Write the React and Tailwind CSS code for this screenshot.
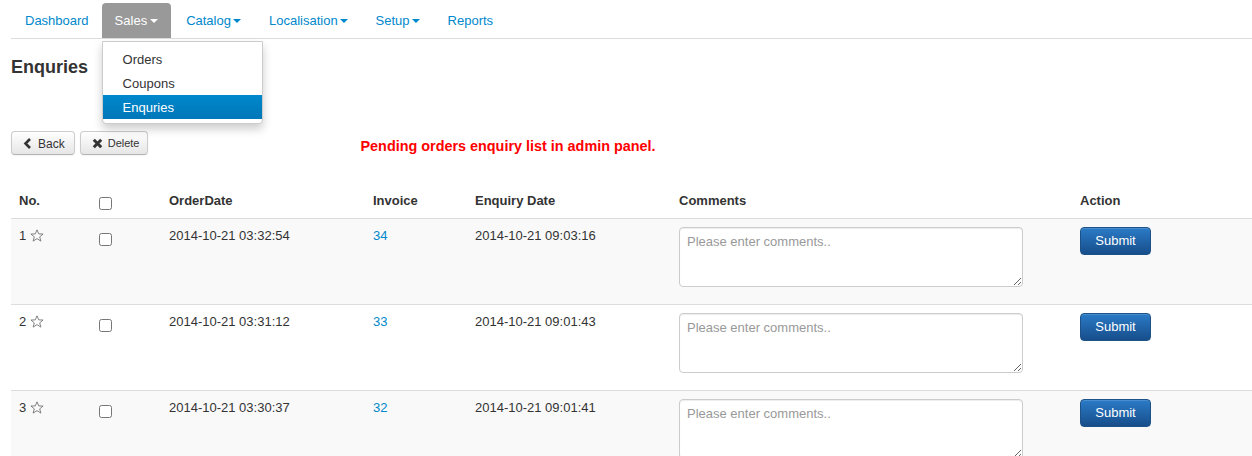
import React from "react";

const font = { fontFamily: '"Liberation Sans", Arial, Helvetica, sans-serif' };

function Caret({ white }) {
  return (
    <span
      className={`inline-block h-0 w-0 border-x-[4px] border-t-[4px] border-x-transparent ${
        white ? "ml-[3px] border-t-white" : "ml-[2px] border-t-[#0088cc]"
      }`}
    />
  );
}

function Star() {
  return (
    <svg width="14" height="13" viewBox="0 0 26 24" className="ml-[4px] -mt-[2px] inline-block align-middle">
      <path
        d="M13 1.5 L16.2 9 L24.3 9.3 L18 14.5 L20.2 22.4 L13 17.8 L5.8 22.4 L8 14.5 L1.7 9.3 L9.8 9 Z"
        fill="none"
        stroke="#666"
        strokeWidth="1.5"
        strokeLinejoin="round"
      />
    </svg>
  );
}

const rows = [
  { no: 1, order: "2014-10-21 03:32:54", inv: "34", enq: "2014-10-21 09:03:16" },
  { no: 2, order: "2014-10-21 03:31:12", inv: "33", enq: "2014-10-21 09:01:43" },
  { no: 3, order: "2014-10-21 03:30:37", inv: "32", enq: "2014-10-21 09:01:41" },
];

const cols = "grid grid-cols-[80px_70px_204px_102px_204px_401px_1fr]";

function Check({ head }) {
  return (
    <div className="h-[18px]">
      <input type="checkbox" className={`m-0 block h-[13px] w-[13px] ${head ? "mt-[5px]" : "mt-[6px]"}`} />
    </div>
  );
}

export default function App() {
  return (
    <div className="h-[456px] w-[1252px] overflow-hidden bg-white text-[13px] leading-[18px] text-[#333]" style={font}>
      <div className="pl-[11px]">
        {/* Nav */}
        <div className="relative flex h-[39px] items-end border-b border-[#ddd] pl-px">
          <a className="flex h-[35px] items-center px-[13px] pt-px text-[#0088cc]">Dashboard</a>
          <div className="relative mr-[2px]">
            <a className="flex h-[35px] items-center rounded-t-[4px] bg-[#999] px-[13px] pt-px text-white">
              Sales
              <Caret white />
            </a>
            <div className="absolute left-0 top-[38px] z-10 w-[161px] rounded-b-[4px] border border-[#ccc] bg-white pb-[4px] pt-[5px] shadow-[0_5px_10px_rgba(0,0,0,0.2)]">
              <div className="flex h-[24px] items-center px-[20px] pt-[2px] text-[#333]">Orders</div>
              <div className="flex h-[24px] items-center px-[20px] pt-px text-[#333]">Coupons</div>
              <div className="flex h-[24px] items-center bg-gradient-to-b from-[#0088cc] to-[#0077b8] px-[20px] pt-px text-white">
                Enquries
              </div>
            </div>
          </div>
          <a className="mr-[2px] flex h-[35px] items-center px-[13px] pt-px text-[#0088cc]">
            Catalog
            <Caret />
          </a>
          <a className="mr-[2px] flex h-[35px] items-center px-[13px] pt-px text-[#0088cc]">
            Localisation
            <Caret />
          </a>
          <a className="mr-[2px] flex h-[35px] items-center px-[13px] pt-px text-[#0088cc]">
            Setup
            <Caret />
          </a>
          <a className="flex h-[35px] items-center px-[13px] pt-px text-[#0088cc]">Reports</a>
        </div>

        {/* Heading */}
        <h1 className="mt-[17px] text-[18px] font-bold leading-[22px] text-[#333]">Enquries</h1>

        {/* Buttons + note */}
        <div className="mt-[53px] flex items-start">
          <button className="flex h-[24px] items-center rounded-[4px] border border-[#ccc] border-b-[#b3b3b3] bg-gradient-to-b from-white to-[#e6e6e6] pl-[11px] pr-[9px] pt-[2px] text-[12px] text-[#333] shadow-[inset_0_1px_0_rgba(255,255,255,0.2),0_1px_2px_rgba(0,0,0,0.05)]">
            <svg width="9" height="11" viewBox="0 0 9 11" className="-mt-[2px] mr-[6px]">
              <path d="M7 1 L2.5 5.5 L7 10" fill="none" stroke="#333" strokeWidth="2.6" />
            </svg>
            Back
          </button>
          <button className="ml-[5px] flex h-[24px] items-center rounded-[4px] border border-[#ccc] border-b-[#b3b3b3] bg-gradient-to-b from-white to-[#e6e6e6] pl-[11px] pr-[8px] text-[11px] text-[#333] shadow-[inset_0_1px_0_rgba(255,255,255,0.2),0_1px_2px_rgba(0,0,0,0.05)]">
            <svg width="11" height="11" viewBox="0 0 11 11" className="mr-[5px]">
              <path d="M1.8 1.8 L9.2 9.2 M9.2 1.8 L1.8 9.2" fill="none" stroke="#333" strokeWidth="3" />
            </svg>
            Delete
          </button>
          <div className="ml-[212px] mt-[6px] text-[14.4px] font-bold leading-[18px] text-[#ff0000]">
            Pending orders enquiry list in admin panel.
          </div>
        </div>

        {/* Table */}
        <div className="mt-[28px] w-[1260px]">
          <div className={`${cols} h-[36px] border-b border-[#ddd] pt-[9px] font-bold`}>
            <div className="px-[8px]">No.</div>
            <div className="px-[8px]">
              <Check head />
            </div>
            <div className="px-[8px]">OrderDate</div>
            <div className="px-[8px]">Invoice</div>
            <div className="px-[8px]">Enquiry Date</div>
            <div className="px-[8px]">Comments</div>
            <div className="px-[8px]">Action</div>
          </div>
          {rows.map((r, i) => (
            <div
              key={r.no}
              className={`${cols} h-[86px] border-b border-[#ddd] pt-[8px] ${i % 2 === 0 ? "bg-[#f9f9f9]" : "bg-white"}`}
            >
              <div className="px-[8px]">
                {r.no}
                <Star />
              </div>
              <div className="px-[8px]">
                <Check />
              </div>
              <div className="px-[8px]">{r.order}</div>
              <div className="px-[8px]">
                <a className="text-[#0088cc]">{r.inv}</a>
              </div>
              <div className="px-[8px]">{r.enq}</div>
              <div className="px-[8px]">
                <textarea
                  placeholder="Please enter comments.."
                  className="block h-[60px] w-[344px] resize-y rounded-[4px] border border-[#ccc] bg-white px-[7px] py-[5px] text-[13px] leading-[18px] text-[#555] shadow-[inset_0_1px_1px_rgba(0,0,0,0.075)] placeholder:text-[#999]"
                  style={font}
                />
              </div>
              <div className="px-[8px]">
                <button className="flex h-[28px] w-[71px] items-center justify-center rounded-[4px] border border-[#1d5289] bg-gradient-to-b from-[#2b7bc7] to-[#174e8b] text-[13px] text-white shadow-[inset_0_1px_0_rgba(255,255,255,0.15)]">
                  Submit
                </button>
              </div>
            </div>
          ))}
        </div>
      </div>
    </div>
  );
}
